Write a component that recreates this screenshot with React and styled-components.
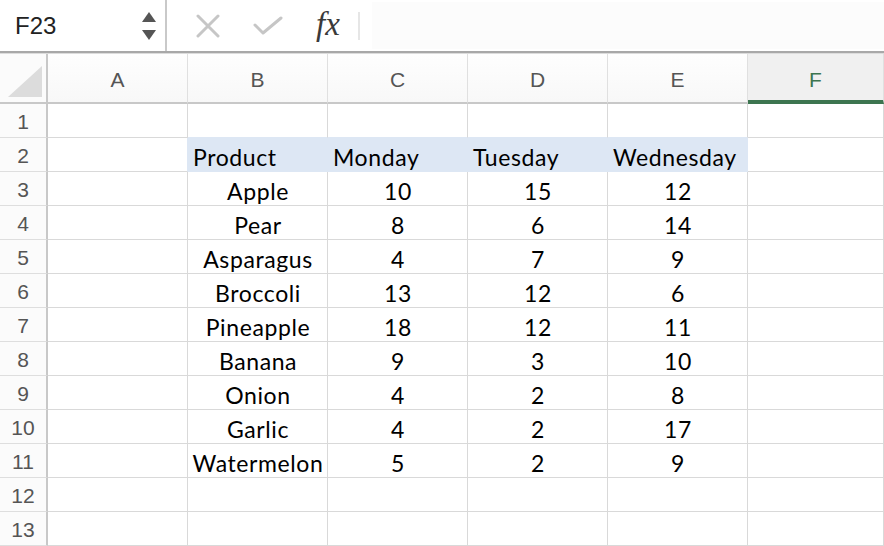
import React from "react";
import styled, { createGlobalStyle, css } from "styled-components";

const GlobalStyle = createGlobalStyle`
  html, body { margin: 0; padding: 0; background: #ffffff; overflow: hidden; }
  * { box-sizing: border-box; }
`;

const GRID = "#d9d9d9";
const FILL = "#dde7f4";
const GREEN = "#3d7550";

const Page = styled.div`
  width: 884px;
  height: 546px;
  display: flex;
  flex-direction: column;
  overflow: hidden;
`;

const TopBar = styled.div`
  display: flex;
  height: 51px;
  background: #ffffff;
`;

const NameBox = styled.div`
  width: 167px;
  display: flex;
  align-items: center;
  justify-content: space-between;
  padding: 0 8px 0 15px;
  border-right: 2px solid #c9c9c9;
  font-family: "Liberation Sans", Arial, sans-serif;
  font-size: 24px;
  color: #222;
`;

const Tools = styled.div`
  display: flex;
  align-items: center;
  padding-left: 29px;
`;

const ToolIcon = styled.span`
  display: flex;
  align-items: center;
  justify-content: center;
  width: ${(p) => p.$w}px;
  height: 51px;
`;

const Fx = styled.span`
  font-family: "Liberation Serif", "Times New Roman", serif;
  font-style: italic;
  font-size: 33px;
  color: #3a3a3a;
  width: 42px;
  text-align: left;
  line-height: 1;
  padding-bottom: 2px;
`;

const Separator = styled.span`
  width: 2px;
  height: 28px;
  background: #e6e6e6;
`;

const FormulaInput = styled.div`
  flex: 1;
  margin: 2px 0 2px 12px;
  background: #fcfcfc;
`;

const Divider = styled.div`
  height: 3px;
  border-top: 2px solid #a8a8a8;
  background: #dcdcdc;
`;

const Sheet = styled.div`
  display: grid;
  grid-template-columns: 48px repeat(5, 140px) 1fr;
  grid-template-rows: 50px repeat(13, 34px);
  flex: 1;
`;

const Corner = styled.div`
  background: #fbfbfb;
  border-right: 2px solid #c8c8c8;
  border-bottom: 2px solid #c8c8c8;
  display: flex;
  align-items: flex-end;
  justify-content: flex-end;
  padding: 0 4px 5px 0;
`;

const ColHead = styled.div`
  display: flex;
  align-items: center;
  justify-content: center;
  font-family: "Liberation Sans", Arial, sans-serif;
  font-size: 21px;
  color: #555;
  background: linear-gradient(#fefefe, #f8f8f8);
  border-right: 1px solid #e0e0e0;
  border-bottom: 2px solid #c8c8c8;
  padding-top: 3px;
  ${(p) =>
    p.$active &&
    css`
      background: #f0f0f0;
      color: ${GREEN};
      border-bottom: 4px solid ${GREEN};
      padding-top: 5px;
    `}
`;

const RowHead = styled.div`
  display: flex;
  align-items: center;
  justify-content: center;
  font-family: "Liberation Sans", Arial, sans-serif;
  font-size: 21px;
  color: #555;
  background: #fbfbfb;
  border-right: 2px solid #c8c8c8;
  border-bottom: 1px solid #dedede;
  padding-top: 3px;
`;

const Cell = styled.div`
  display: flex;
  align-items: center;
  justify-content: ${(p) => (p.$left ? "flex-start" : "center")};
  padding: 4px 4px 0 5px;
  font-family: Lato, "Liberation Sans", sans-serif;
  font-size: 23px;
  letter-spacing: 0.6px;
  color: #000;
  white-space: nowrap;
  overflow: hidden;
  background: ${(p) => (p.$fill ? FILL : "#fff")};
  border-right: 1px solid ${(p) => (p.$fill || p.$edgeRight ? FILL : GRID)};
  border-bottom: 1px solid ${(p) => (p.$fill || p.$edgeBottom ? FILL : GRID)};
`;

const Spinner = () => (
  <svg width="16" height="32" viewBox="0 0 16 32">
    <path d="M8 2 L15 12 L1 12 Z" fill="#555" />
    <path d="M1 20 L15 20 L8 30 Z" fill="#555" />
  </svg>
);

const CrossIcon = () => (
  <svg width="24" height="24" viewBox="0 0 24 24">
    <path d="M2 2 L22 22 M22 2 L2 22" stroke="#c6c6c6" strokeWidth="3" strokeLinecap="round" />
  </svg>
);

const CheckIcon = () => (
  <svg width="30" height="20" viewBox="0 0 30 20">
    <path d="M2 9 L10 17 L28 2" stroke="#c6c6c6" strokeWidth="3" fill="none" strokeLinecap="round" strokeLinejoin="round" />
  </svg>
);

const CornerTriangle = () => (
  <svg width="34" height="31" viewBox="0 0 34 31">
    <path d="M0 31 L34 31 L34 0 Z" fill="#dcdcdc" />
  </svg>
);

const columns = ["A", "B", "C", "D", "E", "F"];

const header = ["Product", "Monday", "Tuesday", "Wednesday"];
const data = [
  ["Apple", 10, 15, 12],
  ["Pear", 8, 6, 14],
  ["Asparagus", 4, 7, 9],
  ["Broccoli", 13, 12, 6],
  ["Pineapple", 18, 12, 11],
  ["Banana", 9, 3, 10],
  ["Onion", 4, 2, 8],
  ["Garlic", 4, 2, 17],
  ["Watermelon", 5, 2, 9],
];

function rowValues(r) {
  if (r === 2) return ["", ...header, ""];
  if (r >= 3 && r <= 11) return ["", ...data[r - 3].map(String), ""];
  return ["", "", "", "", "", ""];
}

export default function App() {
  const rows = Array.from({ length: 13 }, (_, i) => i + 1);
  return (
    <Page>
      <GlobalStyle />
      <TopBar>
        <NameBox>
          <span>F23</span>
          <Spinner />
        </NameBox>
        <Tools>
          <ToolIcon $w={24}>
            <CrossIcon />
          </ToolIcon>
          <ToolIcon $w={96}>
            <CheckIcon />
          </ToolIcon>
          <Fx>fx</Fx>
          <Separator />
        </Tools>
        <FormulaInput />
      </TopBar>
      <Divider />
      <Sheet>
        <Corner>
          <CornerTriangle />
        </Corner>
        {columns.map((c) => (
          <ColHead key={c} $active={c === "F"}>
            {c}
          </ColHead>
        ))}
        {rows.map((r) => {
          const vals = rowValues(r);
          return (
            <React.Fragment key={r}>
              <RowHead>{r}</RowHead>
              {vals.map((v, ci) => {
                const filled = r === 2 && ci >= 1 && ci <= 4;
                return (
                  <Cell
                    key={ci}
                    $fill={filled}
                    $left={r === 2}
                    $edgeRight={r === 2 && ci === 0}
                    $edgeBottom={r === 1 && ci >= 1 && ci <= 4}
                  >
                    {v}
                  </Cell>
                );
              })}
            </React.Fragment>
          );
        })}
      </Sheet>
    </Page>
  );
}
